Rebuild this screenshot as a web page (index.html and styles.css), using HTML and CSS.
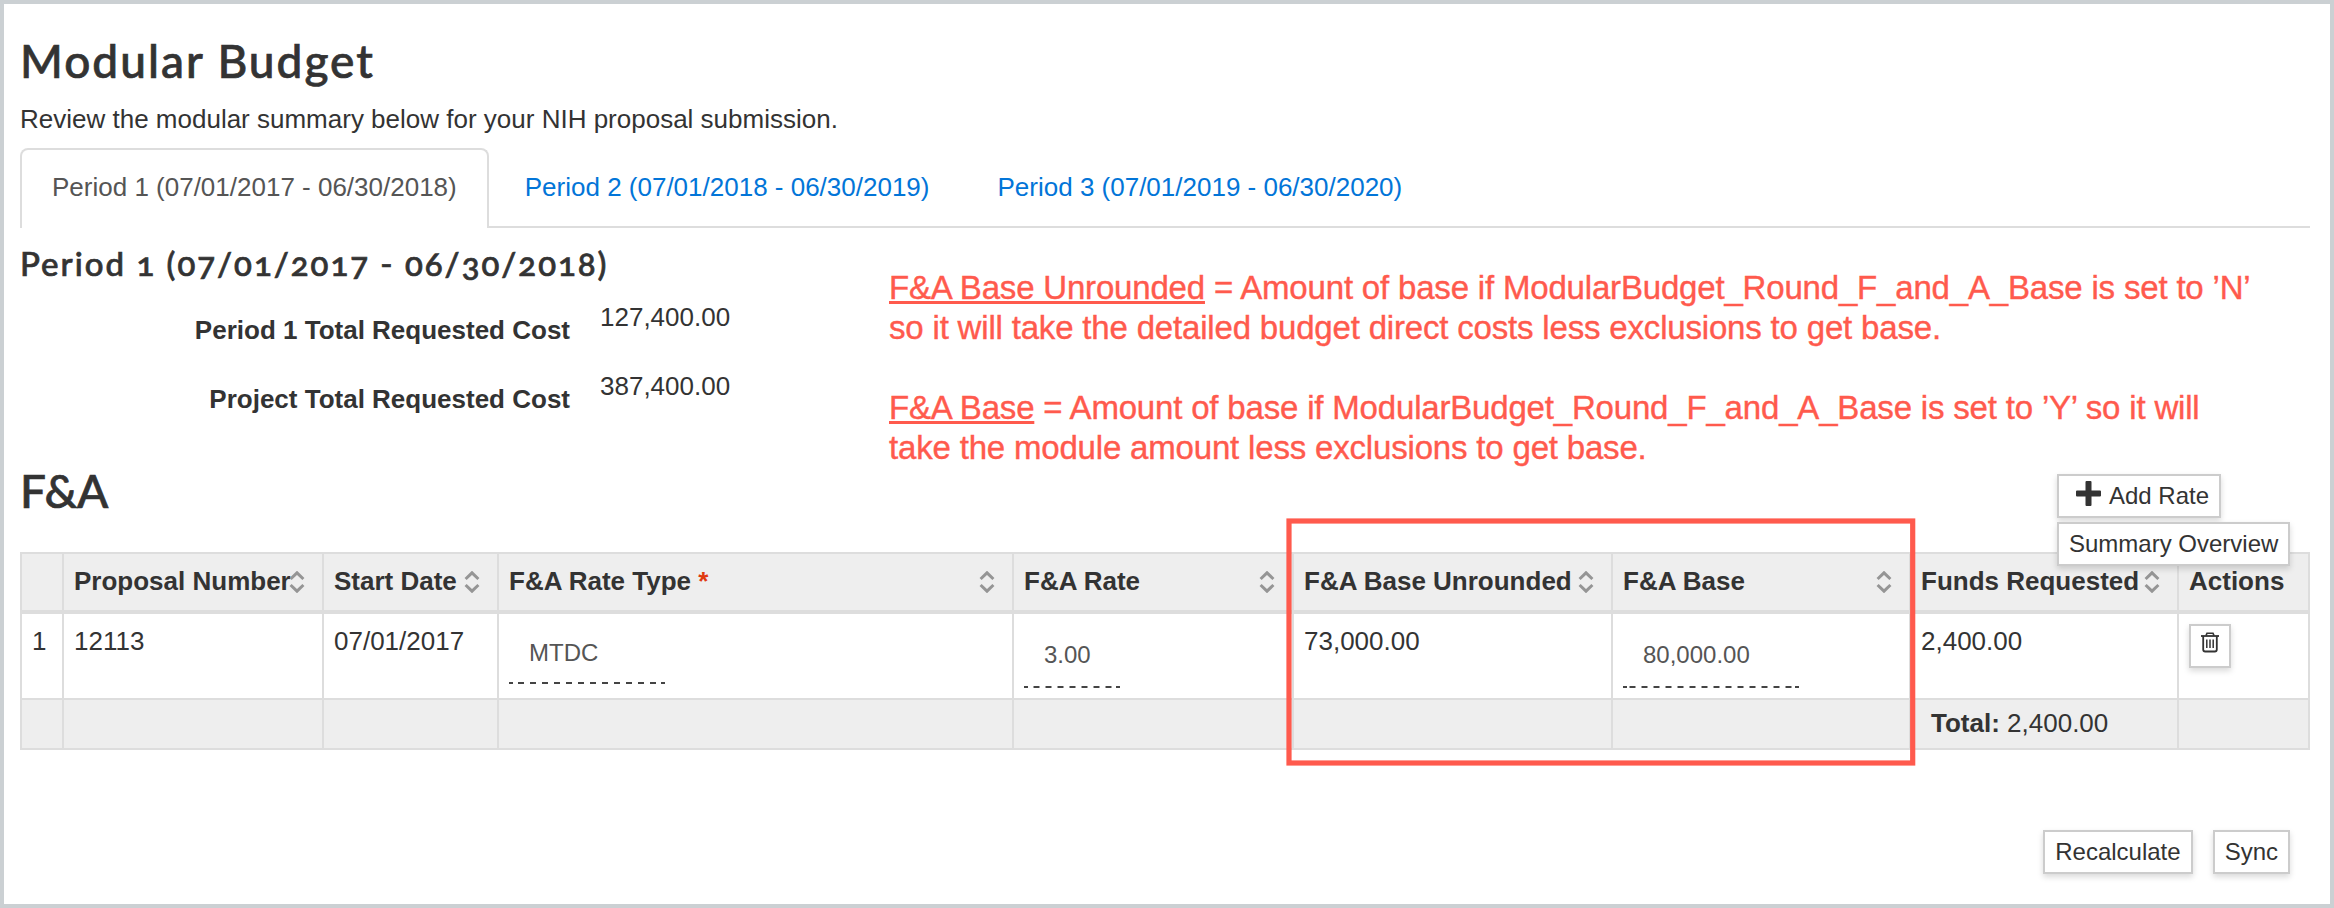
FILE: index.html
```html
<!DOCTYPE html>
<html lang="en">
<head>
<meta charset="utf-8">
<title>Modular Budget</title>
<link rel="stylesheet" href="styles.css">
</head>
<body>
<svg width="0" height="0" class="defs">
  <symbol id="sort" viewBox="0 0 16 22">
    <path d="M1.6 8 8 1.8 14.4 8M1.6 14 8 20.2 14.4 14" fill="none" stroke="#959595" stroke-width="3"/>
  </symbol>
</svg>
<main class="page">
  <h1 class="title">Modular Budget</h1>
  <p class="intro">Review the modular summary below for your NIH proposal submission.</p>
  <nav class="tabs">
    <a class="tab tab-active">Period 1 (07/01/2017 - 06/30/2018)</a>
    <a class="tab">Period 2 (07/01/2018 - 06/30/2019)</a>
    <a class="tab">Period 3 (07/01/2019 - 06/30/2020)</a>
  </nav>
  <h3 class="period">Period 1 (07/01/2017 - 06/30/2018)</h3>
  <dl class="totals">
    <dt>Period 1 Total Requested Cost</dt><dd>127,400.00</dd>
    <dt>Project Total Requested Cost</dt><dd>387,400.00</dd>
  </dl>
  <h2 class="section">F&amp;A</h2>

  <div class="table">
    <div class="row head">
      <div></div>
      <div>Proposal Number<svg class="sort"><use href="#sort"/></svg></div>
      <div>Start Date<svg class="sort"><use href="#sort"/></svg></div>
      <div>F&amp;A Rate Type <span class="req">*</span><svg class="sort"><use href="#sort"/></svg></div>
      <div>F&amp;A Rate<svg class="sort"><use href="#sort"/></svg></div>
      <div>F&amp;A Base Unrounded<svg class="sort"><use href="#sort"/></svg></div>
      <div>F&amp;A Base<svg class="sort"><use href="#sort"/></svg></div>
      <div>Funds Requested<svg class="sort"><use href="#sort"/></svg></div>
      <div>Actions</div>
    </div>
    <div class="row body">
      <div>1</div>
      <div>12113</div>
      <div>07/01/2017</div>
      <div><span class="field type">MTDC</span></div>
      <div><span class="field rate">3.00</span></div>
      <div>73,000.00</div>
      <div><span class="field base">80,000.00</span></div>
      <div>2,400.00</div>
      <div class="actions"><button class="btn trash" aria-label="Delete">
        <svg width="18" height="21" viewBox="0 0 18 21" fill="none" stroke="#333">
          <path d="M0 4h18" stroke-width="1.8"/>
          <path d="M5 3.6 6 1.2h6l1 2.400" stroke-width="1.6"/>
          <path d="M2.200 4v13.500q0 2 2 2h9.600q2 0 2-2V4" stroke-width="1.8"/>
          <path d="M5.800 7.500v8.500M9 7.500v8.500M12.200 7.500v8.500" stroke-width="1.500"/>
        </svg></button></div>
    </div>
    <div class="row foot">
      <div></div><div></div><div></div><div></div><div></div><div></div><div></div>
      <div class="sum"><b>Total:</b> 2,400.00</div>
      <div></div>
    </div>
  </div>

  <div class="bottom">
    <button class="btn">Recalculate</button>
    <button class="btn">Sync</button>
  </div>

  <div class="float-buttons">
    <button class="btn add"><svg width="25" height="25" viewBox="0 0 25 25"><path d="M9.500 1q0-1 1-1h4q1 0 1 1v8.500H24q1 0 1 1v4q0 1-1 1h-8.500V24q0 1-1 1h-4q-1 0-1-1v-8.500H1q-1 0-1-1v-4q0-1 1-1h8.500z" fill="#333"/></svg>Add Rate</button>
    <button class="btn">Summary Overview</button>
  </div>

  <div class="note">
    <p><u>F&amp;A Base Unrounded</u> = Amount of base if ModularBudget_Round_F_and_A_Base is set to ’N’<br>so it will take the detailed budget direct costs less exclusions to get base.</p>
    <p><u>F&amp;A Base</u> = Amount of base if ModularBudget_Round_F_and_A_Base is set to ’Y’ so it will<br>take the module amount less exclusions to get base.</p>
  </div>
  <svg class="highlight" width="632" height="250"><rect x="4" y="4" width="623.700" height="242" fill="none" stroke="#ff5a4d" stroke-width="5.200"/></svg>
</main>
</body>
</html>
```
FILE: styles.css
```css
* { box-sizing: border-box; }
body {
  margin: 0;
  font: 26px/30px "Liberation Sans", Arial, sans-serif;
  color: #333;
  background: #fff;
}
.defs { position: absolute; }
.page {
  position: relative;
  width: 2334px;
  height: 908px;
  border: 4px solid #cbd0d3;
  padding: 29px 20px 0 16px;
  display: flex;
  flex-direction: column;
  overflow: hidden;
}
h1, h2, h3, p, dl, dd { margin: 0; }
h1, h2, h3 { font-family: Lato, sans-serif; font-weight: 500; -webkit-text-stroke: .7px #333; }
.title { font-size: 46px; line-height: 56px; letter-spacing: 2px; }
.intro { margin-top: 15px; }
.tabs {
  display: flex;
  gap: 4px;
  margin-top: 14px;
  height: 80px;
  border-bottom: 2px solid #ddd;
}
.tab {
  height: 80px;
  padding: 22px 30px 0;
  border: 2px solid transparent;
  color: #0275d8;
  white-space: nowrap;
}
.tab-active {
  color: #555;
  background: #fff;
  border-color: #ddd;
  border-bottom: 0;
  border-radius: 8px 8px 0 0;
}
.period {
  margin-top: 15px;
  font-size: 33px;
  line-height: 40px;
  letter-spacing: 2px;
  font-variant-numeric: oldstyle-nums;
}
.totals {
  display: grid;
  grid-template-columns: 550px 1fr;
  grid-auto-rows: 69px;
  column-gap: 30px;
  margin-top: 19px;
  height: 161px;
}
.totals dt { text-align: right; font-weight: bold; padding-top: 13px; }
.section { font-size: 46px; line-height: 56px; letter-spacing: -1.500px; }

.table { margin-top: 33px; width: 2290px; border-right: 2px solid #ddd; }
.row {
  display: grid;
  grid-template-columns: 42px 260px 175px 515px 280px 319px 298px 268px 131px;
}
.row > div {
  position: relative;
  border-left: 2px solid #ddd;
  padding: 12px 0 0 10px;
  white-space: nowrap;
}
.head { height: 58px; background: #eee; border-top: 2px solid #ddd; font-weight: bold; }
.body { height: 88px; border-top: 4px solid #ddd; }
.foot { height: 52px; background: #eee; border: solid #ddd; border-width: 2px 0; }
.row > .sum { padding: 8px 0 0 20px; }
.sort { position: absolute; right: 17px; top: 16.500px; width: 16px; height: 22px; }
.req { color: #e03a10; }
.field {
  --phase: 9px;
  display: block;
  padding-left: 20px;
  font-size: 24px;
  line-height: 28px;
  color: #555;
  background:
    linear-gradient(#444, #444) left bottom / 4px 2px no-repeat,
    linear-gradient(#444, #444) right bottom / 4px 2px no-repeat,
    linear-gradient(90deg, #444 6px, transparent 6px) var(--phase) bottom / 12px 2px repeat-x;
}
.type { width: 156px; height: 58px; padding-top: 13px; }
.rate { --phase: 9.500px; width: 96px; height: 62px; padding-top: 15px; }
.base { --phase: 6.500px; width: 176px; height: 62px; padding-top: 15px; }

.btn {
  height: 44px;
  padding: 0 10px;
  border: 2px solid #ccc;
  background: #fff;
  color: #333;
  font: 24px/40px "Liberation Sans", Arial, sans-serif;
  box-shadow: 0 3px 6px rgba(0, 0, 0, .15);
  white-space: nowrap;
}
.row > .actions { padding-top: 10px; }
.trash { display: flex; align-items: flex-start; width: 42px; padding: 6px 10px 0; }
.bottom {
  display: flex;
  justify-content: flex-end;
  gap: 20px;
  margin-top: 80px;
  padding-right: 20px;
}
.float-buttons {
  position: absolute;
  left: 2053px;
  top: 470px;
  display: flex;
  flex-direction: column;
  align-items: flex-start;
  gap: 4px;
}
.add { display: flex; padding-left: 17px; }
.add svg { margin: 5px 8px 0 0; }
.note {
  position: absolute;
  left: 885px;
  top: 264px;
  display: flex;
  flex-direction: column;
  gap: 40px;
  color: #ff5a4d;
  font-size: 33px;
  line-height: 40px;
  letter-spacing: -.18px;
  -webkit-text-stroke: .4px #ff5a4d;
  white-space: nowrap;
}
.note u { text-decoration-thickness: 3px; text-underline-offset: 2px; text-decoration-skip-ink: none; }
.highlight { position: absolute; left: 1281px; top: 513px; }
```
